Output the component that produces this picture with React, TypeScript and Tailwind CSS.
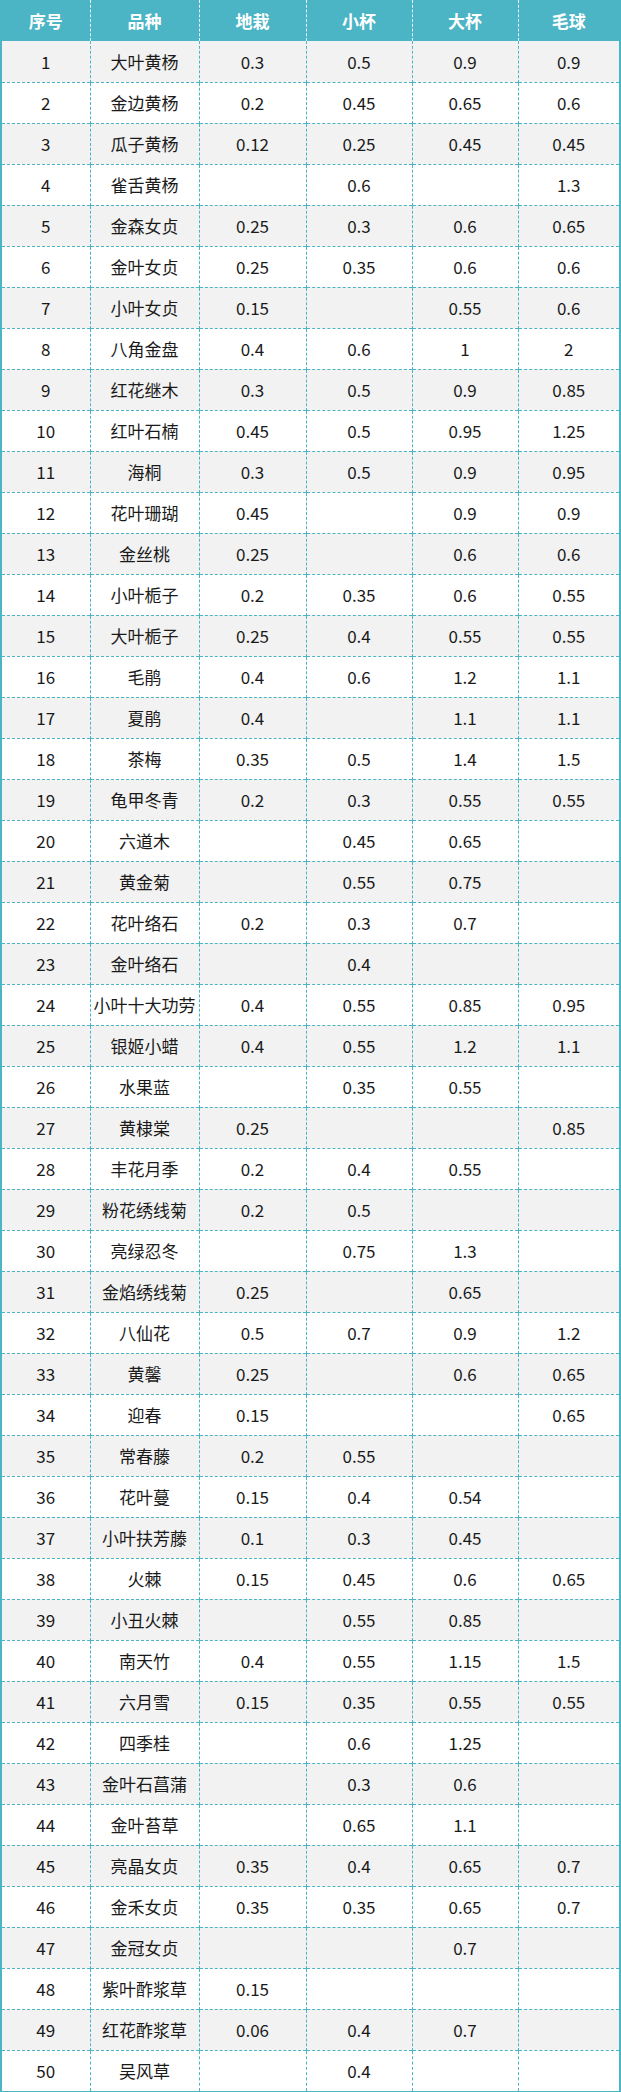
import React from "react";

const headers = ["序号", "品种", "地栽", "小杯", "大杯", "毛球"];

const rows: [string, string, string, string, string][] = [
	["大叶黄杨", "0.3", "0.5", "0.9", "0.9"],
	["金边黄杨", "0.2", "0.45", "0.65", "0.6"],
	["瓜子黄杨", "0.12", "0.25", "0.45", "0.45"],
	["雀舌黄杨", "", "0.6", "", "1.3"],
	["金森女贞", "0.25", "0.3", "0.6", "0.65"],
	["金叶女贞", "0.25", "0.35", "0.6", "0.6"],
	["小叶女贞", "0.15", "", "0.55", "0.6"],
	["八角金盘", "0.4", "0.6", "1", "2"],
	["红花继木", "0.3", "0.5", "0.9", "0.85"],
	["红叶石楠", "0.45", "0.5", "0.95", "1.25"],
	["海桐", "0.3", "0.5", "0.9", "0.95"],
	["花叶珊瑚", "0.45", "", "0.9", "0.9"],
	["金丝桃", "0.25", "", "0.6", "0.6"],
	["小叶栀子", "0.2", "0.35", "0.6", "0.55"],
	["大叶栀子", "0.25", "0.4", "0.55", "0.55"],
	["毛鹃", "0.4", "0.6", "1.2", "1.1"],
	["夏鹃", "0.4", "", "1.1", "1.1"],
	["茶梅", "0.35", "0.5", "1.4", "1.5"],
	["龟甲冬青", "0.2", "0.3", "0.55", "0.55"],
	["六道木", "", "0.45", "0.65", ""],
	["黄金菊", "", "0.55", "0.75", ""],
	["花叶络石", "0.2", "0.3", "0.7", ""],
	["金叶络石", "", "0.4", "", ""],
	["小叶十大功劳", "0.4", "0.55", "0.85", "0.95"],
	["银姬小蜡", "0.4", "0.55", "1.2", "1.1"],
	["水果蓝", "", "0.35", "0.55", ""],
	["黄棣棠", "0.25", "", "", "0.85"],
	["丰花月季", "0.2", "0.4", "0.55", ""],
	["粉花绣线菊", "0.2", "0.5", "", ""],
	["亮绿忍冬", "", "0.75", "1.3", ""],
	["金焰绣线菊", "0.25", "", "0.65", ""],
	["八仙花", "0.5", "0.7", "0.9", "1.2"],
	["黄馨", "0.25", "", "0.6", "0.65"],
	["迎春", "0.15", "", "", "0.65"],
	["常春藤", "0.2", "0.55", "", ""],
	["花叶蔓", "0.15", "0.4", "0.54", ""],
	["小叶扶芳藤", "0.1", "0.3", "0.45", ""],
	["火棘", "0.15", "0.45", "0.6", "0.65"],
	["小丑火棘", "", "0.55", "0.85", ""],
	["南天竹", "0.4", "0.55", "1.15", "1.5"],
	["六月雪", "0.15", "0.35", "0.55", "0.55"],
	["四季桂", "", "0.6", "1.25", ""],
	["金叶石菖蒲", "", "0.3", "0.6", ""],
	["金叶苔草", "", "0.65", "1.1", ""],
	["亮晶女贞", "0.35", "0.4", "0.65", "0.7"],
	["金禾女贞", "0.35", "0.35", "0.65", "0.7"],
	["金冠女贞", "", "", "0.7", ""],
	["紫叶酢浆草", "0.15", "", "", ""],
	["红花酢浆草", "0.06", "0.4", "0.7", ""],
	["吴风草", "", "0.4", "", ""],
];

const colWidths = ["w-[88px]", "w-[109px]", "w-[107px]", "w-[106px]", "w-[106px]", "w-auto"];

export default function App() {
	return (
		<div
			className="w-[621px] border-x-2 border-b-2 border-[#4bb5c5] bg-white text-[#1a1a1a]"
			style={{ fontFamily: '"Noto Sans CJK SC", "Noto Sans", sans-serif' }}
		>
			<table className="w-full table-fixed border-collapse">
				<colgroup>
					{colWidths.map((w, i) => (
						<col key={i} className={w} />
					))}
				</colgroup>
				<thead>
					<tr className="h-[41px] bg-[#4bb5c5]">
						{headers.map((h, i) => (
							<th
								key={h}
								className={`text-center text-[17px] font-bold text-white ${
									i > 0 ? "border-l border-dashed border-l-white/90" : ""
								}`}
							>
								{h}
							</th>
						))}
					</tr>
				</thead>
				<tbody>
					{rows.map((row, r) => (
						<tr key={r} className={`h-[41px] ${r % 2 === 0 ? "bg-[#f2f2f2]" : "bg-white"}`}>
							{[String(r + 1), ...row].map((cell, c) => (
								<td
									key={c}
									className={`p-0 text-center text-[17px] leading-none ${
										r > 0 ? "border-t border-dashed border-t-[#4bb5c5]" : ""
									} ${c > 0 ? "border-l border-dashed border-l-[#4bb5c5]" : ""}`}
								>
									{cell}
								</td>
							))}
						</tr>
					))}
				</tbody>
			</table>
		</div>
	);
}
